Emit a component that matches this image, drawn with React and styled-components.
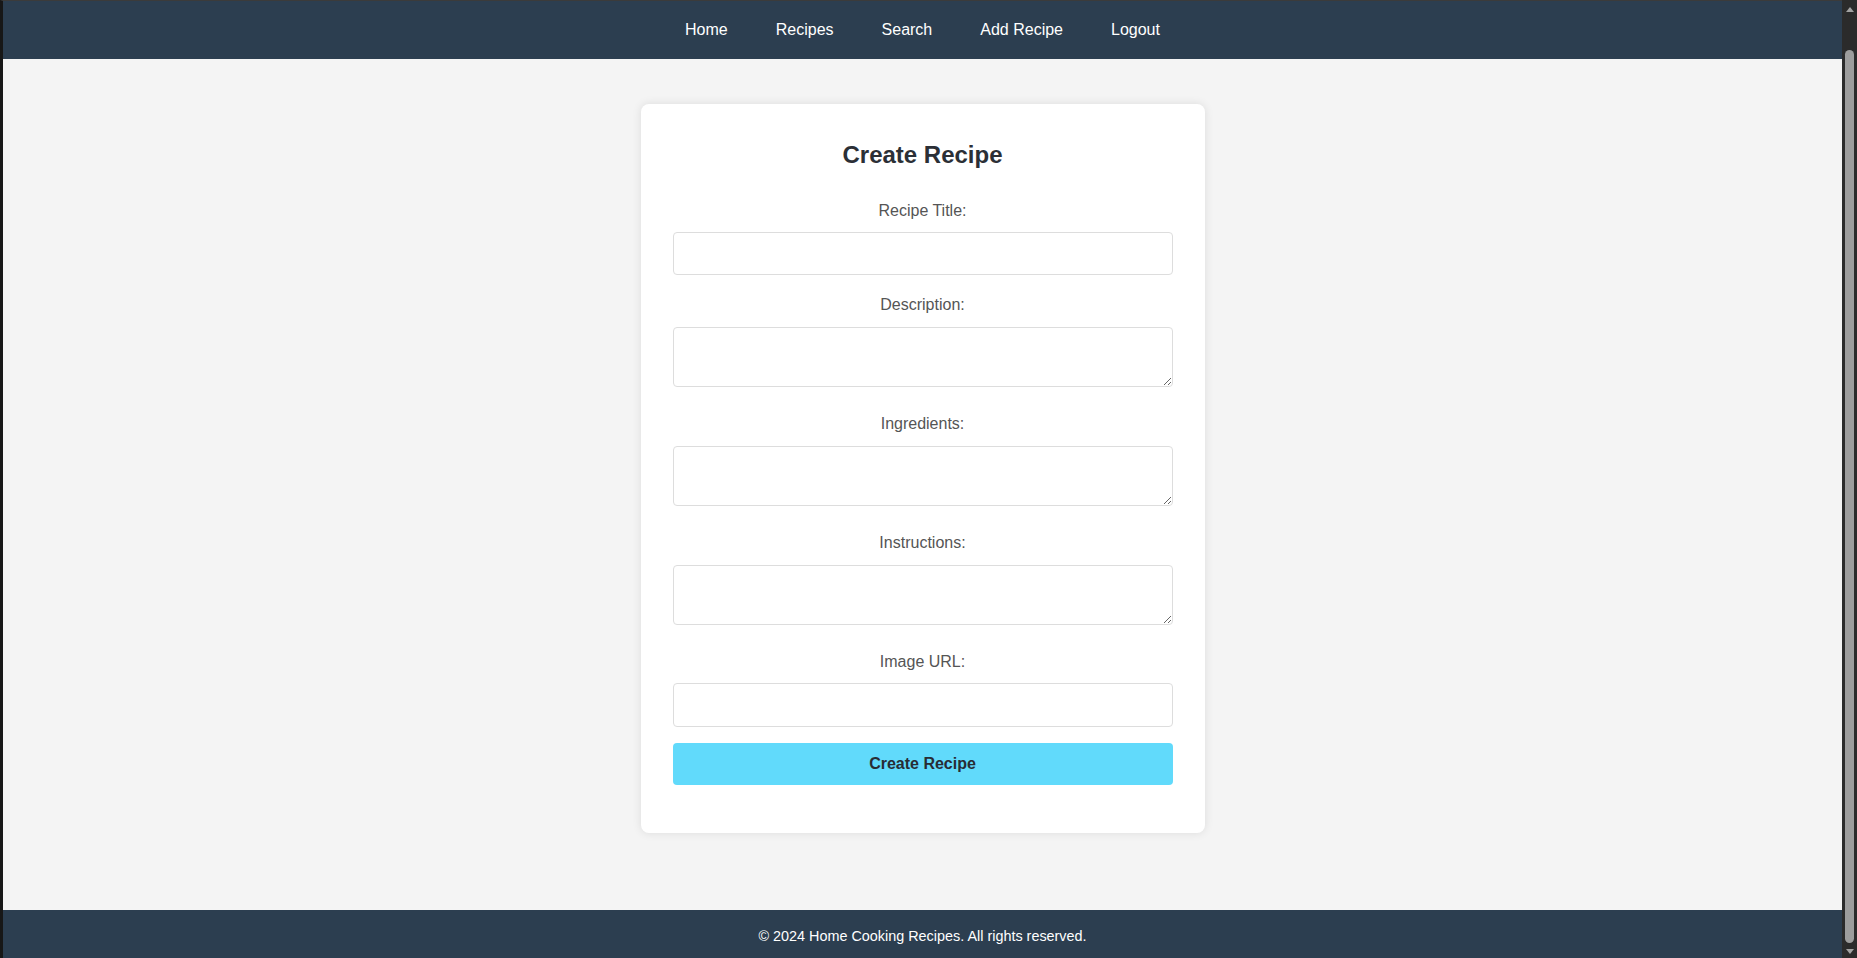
import React from "react";
import styled, { createGlobalStyle } from "styled-components";

const GlobalStyle = createGlobalStyle`
  body {
    margin: 0;
    background: #f4f4f4;
    font-family: "Liberation Sans", Arial, sans-serif;
  }
  * {
    box-sizing: border-box;
  }
`;

const Page = styled.div`
  display: flex;
  flex-direction: column;
  min-height: calc(100vh + 2px);
  box-sizing: content-box;
  margin-right: 15px;
  border-top: 1px solid #3b3b3b;
  border-left: 3px solid #171717;
`;

/* Browser window scrollbar, drawn over the right edge as in the capture */
const ScrollTrack = styled.div`
  position: fixed;
  top: 0;
  right: 0;
  bottom: 0;
  width: 15px;
  background: #2b2b2b;
  pointer-events: none;
`;

const ScrollThumb = styled.div`
  position: absolute;
  top: 50px;
  bottom: 15px;
  left: 3px;
  width: 9px;
  border-radius: 5px;
  background: #9d9d9d;
`;

const ScrollArrow = styled.div`
  position: absolute;
  left: 3.5px;
  width: 0;
  height: 0;
  border-left: 4px solid transparent;
  border-right: 4px solid transparent;
  ${(p) =>
    p.$down
      ? `bottom: 4px; border-top: 5px solid #a3a3a3;`
      : `top: 7px; border-bottom: 5px solid #a3a3a3;`}
`;

const Nav = styled.nav`
  background: #2c3e50;
  padding: 20px 0;
  display: flex;
  justify-content: center;
  gap: 48px;
`;

const NavLink = styled.a`
  color: #ffffff;
  text-decoration: none;
  font-size: 16px;
  line-height: 18px;
`;

const Main = styled.main`
  flex: 1;
  padding-top: 45px;
`;

const Card = styled.div`
  width: 564px;
  margin: 0 auto;
  padding: 32px;
  background: #ffffff;
  border-radius: 8px;
  box-shadow: 0 0 10px rgba(0, 0, 0, 0.1);
  text-align: center;
`;

const Title = styled.h2`
  margin: 5px 0 32px;
  font-size: 24px;
  line-height: 27.6px;
  color: #2b2f36;
`;

const Label = styled.label`
  display: block;
  padding-top: 1px;
  font-size: 16px;
  line-height: 18.4px;
  color: #555;
  margin-bottom: 12px;
`;

const fieldCss = `
  display: block;
  width: 100%;
  padding: 12px;
  font-size: 15px;
  font-family: "Liberation Sans", Arial, sans-serif;
  border: 1px solid #ddd;
  border-radius: 4px;
  background: #fff;
  color: #333;
`;

const Input = styled.input`
  ${fieldCss}
  height: 43.3px;
  margin-bottom: ${(p) => p.$gap || 20}px;
`;

const TextArea = styled.textarea`
  ${fieldCss}
  height: 60.5px;
  margin-bottom: 27px;
`;

const Button = styled.button`
  display: block;
  width: 100%;
  height: 42.4px;
  padding: 0 12px;
  margin-bottom: 16px;
  background: #61dafb;
  color: #282c34;
  border: none;
  border-radius: 4px;
  font-family: "Liberation Sans", Arial, sans-serif;
  font-size: 16px;
  font-weight: bold;
  cursor: pointer;
`;

const Footer = styled.footer`
  background: #2c3e50;
  color: #ffffff;
  text-align: center;
  padding: 18px 16px 16px;
  font-size: 14.4px;
  line-height: 16.6px;
`;

export default function App() {
  return (
    <>
      <GlobalStyle />
      <Page>
        <Nav>
          <NavLink href="#">Home</NavLink>
          <NavLink href="#">Recipes</NavLink>
          <NavLink href="#">Search</NavLink>
          <NavLink href="#">Add Recipe</NavLink>
          <NavLink href="#">Logout</NavLink>
        </Nav>
        <Main>
          <Card>
            <Title>Create Recipe</Title>
            <form onSubmit={(e) => e.preventDefault()}>
              <Label htmlFor="title">Recipe Title:</Label>
              <Input id="title" type="text" />
              <Label htmlFor="description">Description:</Label>
              <TextArea id="description" />
              <Label htmlFor="ingredients">Ingredients:</Label>
              <TextArea id="ingredients" />
              <Label htmlFor="instructions">Instructions:</Label>
              <TextArea id="instructions" />
              <Label htmlFor="image">Image URL:</Label>
              <Input id="image" type="text" $gap={16} />
              <Button type="submit">Create Recipe</Button>
            </form>
          </Card>
        </Main>
        <Footer>© 2024 Home Cooking Recipes. All rights reserved.</Footer>
      </Page>
      <ScrollTrack aria-hidden="true">
        <ScrollArrow />
        <ScrollThumb />
        <ScrollArrow $down />
      </ScrollTrack>
    </>
  );
}
